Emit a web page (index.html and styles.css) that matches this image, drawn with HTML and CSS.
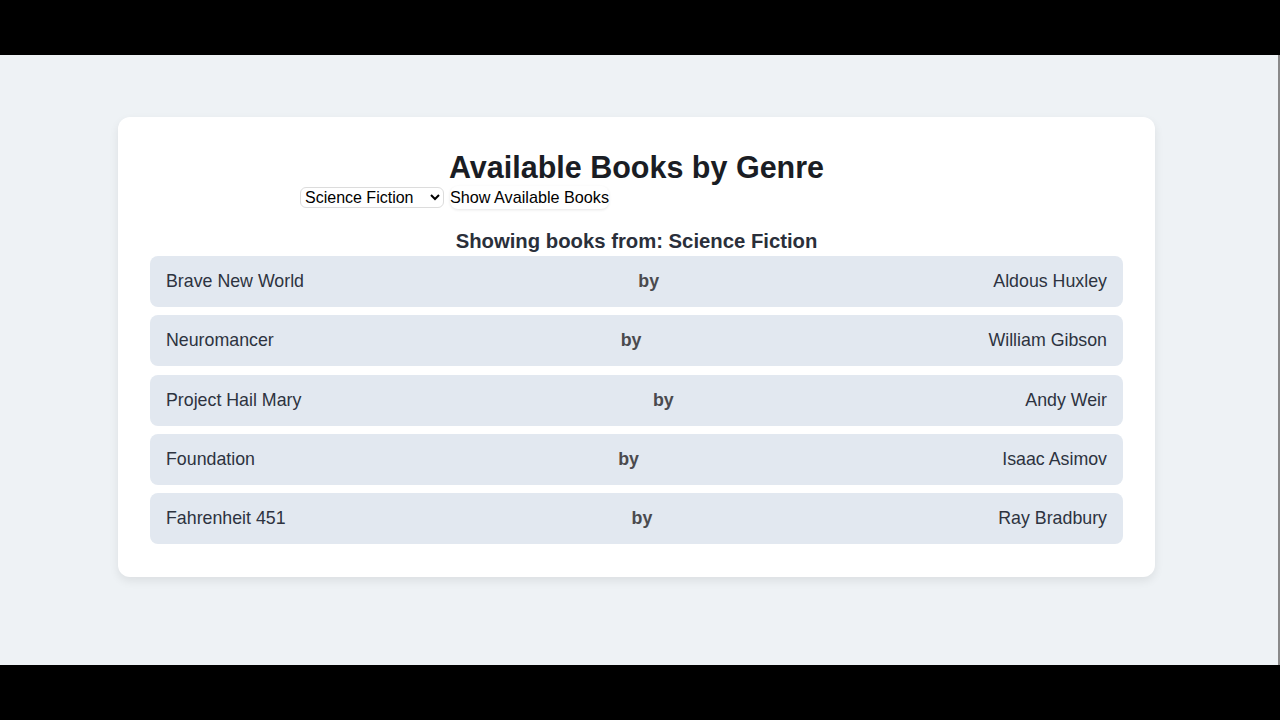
FILE: index.html
```html
<!DOCTYPE html>
<html>
	<head>
		<title>Available Books by Genre</title>

		<link rel="stylesheet" href="styles.css">
	</head>

	<body>
		<div class="screen">
			<div class="bookCard">
				<h1>Available Books by Genre</h1>

				<div class="controls">
					<select id="genre">
						<option>Fantasy</option>
						<option selected>Science Fiction</option>
						<option>Mystery</option>
						<option>Romance</option>
					</select>
					<button onclick="showBooks()">Show Available Books</button>
				</div>

				<h2 id="heading">Showing books from: Science Fiction</h2>

				<div class="bookList" id="books">
					<div class="bookRow">
						<span class="title">Brave New World</span>
						<span class="by">by</span>
						<span class="author">Aldous Huxley</span>
					</div>
					<div class="bookRow">
						<span class="title">Neuromancer</span>
						<span class="by">by</span>
						<span class="author">William Gibson</span>
					</div>
					<div class="bookRow">
						<span class="title">Project Hail Mary</span>
						<span class="by">by</span>
						<span class="author">Andy Weir</span>
					</div>
					<div class="bookRow">
						<span class="title">Foundation</span>
						<span class="by">by</span>
						<span class="author">Isaac Asimov</span>
					</div>
					<div class="bookRow">
						<span class="title">Fahrenheit 451</span>
						<span class="by">by</span>
						<span class="author">Ray Bradbury</span>
					</div>
				</div>
			</div>
		</div>
	</body>
</html>
```

FILE: styles.css
```css
html, body {
  margin: 0;
  background-color: #000;
  font-family: "Liberation Sans", Arial, sans-serif;
}

.screen {
  margin-top: 55px;
  height: 610px;
  box-sizing: border-box;
  padding: 62px 123px 0 118px;
  background-color: #eef2f5;
  border-right: 2px solid #8a8a8a;
}

.bookCard {
  background-color: #fff;
  border-radius: 12px;
  padding: 32px 32px 33px 32px;
  box-shadow: 0 4px 10px rgba(0, 0, 0, 0.08);
}

.bookCard h1 {
  margin: 0;
  text-align: center;
  font-size: 30.5px;
  line-height: 37px;
  color: #1a1d24;
}

.controls {
  display: flex;
  align-items: center;
  gap: 6px;
  margin-left: 150px;
}

.controls select {
  width: 144px;
  height: 21px;
  font-family: inherit;
  font-size: 16px;
  color: #000;
  background-color: #fff;
  border: 1px solid #dcdcdc;
  border-radius: 6px;
  padding: 0;
}

.controls button {
  font-family: inherit;
  font-size: 16.2px;
  color: #000;
  background-color: #fff;
  border: none;
  border-radius: 8px;
  padding: 2px 0 2px 0;
  box-shadow: 0 1px 3px rgba(0, 0, 0, 0.1);
}

.bookCard h2 {
  margin: 21px 0 3px 0;
  text-align: center;
  font-size: 20.3px;
  color: #2a2f3a;
}

.bookList {
  display: flex;
  flex-direction: column;
  gap: 8.25px;
}

.bookRow {
  display: flex;
  justify-content: space-between;
  align-items: center;
  height: 51px;
  padding: 0 16px;
  background-color: #e2e8f0;
  border-radius: 8px;
  font-size: 17.8px;
  color: #2d3340;
}

.bookRow .by {
  font-weight: bold;
  color: #4a4a4e;
}
```
